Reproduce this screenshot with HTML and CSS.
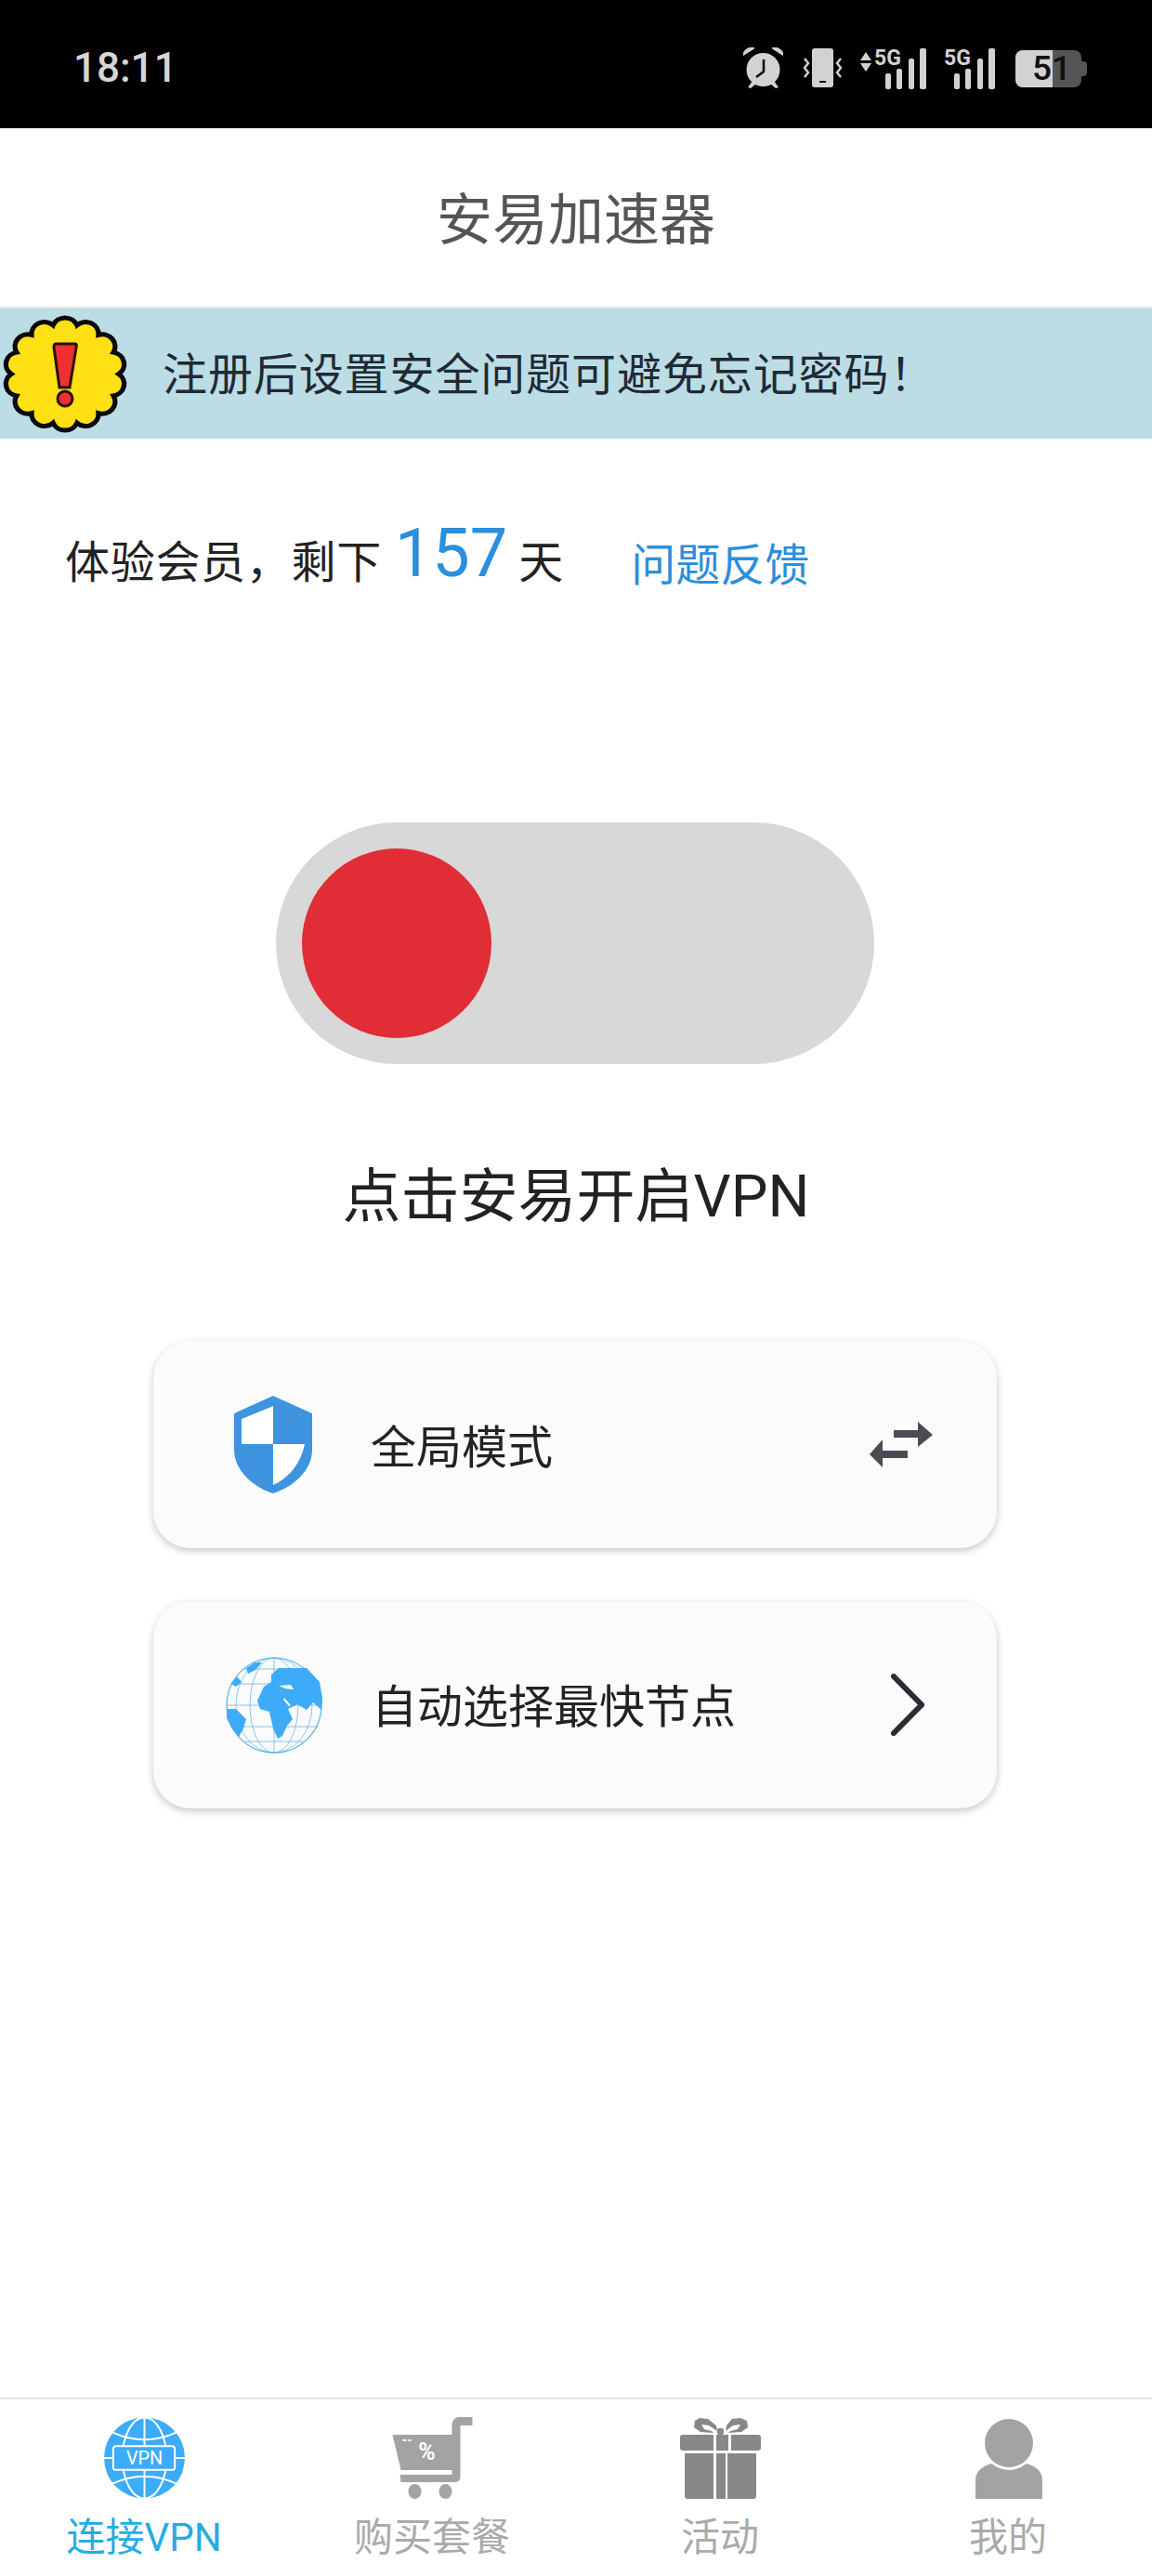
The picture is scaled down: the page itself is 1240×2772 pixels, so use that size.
FILE: index.html
```html
<!DOCTYPE html>
<html lang="zh-CN">
<head>
    <meta charset="UTF-8">
    <meta name="viewport" content="width=device-width, initial-scale=1.0">
    <title>安易加速器</title>
    <link rel="stylesheet" href="styles.css">
</head>
<body>

    <div class="status-bar">
        <span class="status-time">18:11</span>
        <div class="status-icons">
            <svg class="ic-alarm" viewBox="0 0 43 44">
                <path d="M0 8 Q3 0 11 1 Z M43 8 Q40 0 32 1 Z" fill="#d2d2d2" stroke="#d2d2d2" stroke-width="2" stroke-linejoin="round"/>
                <circle cx="21.5" cy="24" r="18" fill="#d2d2d2"/>
                <path d="M5 43 L10 36 L14 39 L8 44 Z M38 43 L33 36 L29 39 L35 44 Z" fill="#d2d2d2"/>
                <path d="M22 13 L22 26 L14 32" fill="none" stroke="#111" stroke-width="2.6"/>
            </svg>
            <svg class="ic-vibrate" viewBox="0 0 43 42">
                <rect x="10" y="0" width="23" height="42" rx="3" fill="#d2d2d2"/>
                <rect x="18" y="35" width="7" height="2" fill="#111"/>
                <path d="M2 11 L6 16 L2 21 L6 26 L2 31 M41 11 L37 16 L41 21 L37 26 L41 31" fill="none" stroke="#d2d2d2" stroke-width="2.4"/>
            </svg>
            <svg class="ic-signal-a" viewBox="0 0 72 44">
                <path d="M0 13 L6 4 L12 13 Z M0 16 L12 16 L6 25 Z" fill="#d2d2d2"/>
                <text x="15" y="18" class="net-label">5G</text>
                <rect x="27" y="27" width="6" height="17" rx="2" fill="#d2d2d2"/>
                <rect x="39" y="22" width="6" height="22" rx="2" fill="#d2d2d2"/>
                <rect x="52" y="11" width="6" height="33" rx="2" fill="#d2d2d2"/>
                <rect x="64" y="0" width="7" height="44" rx="2" fill="#d2d2d2"/>
            </svg>
            <svg class="ic-signal-b" viewBox="0 0 56 44">
                <text x="0" y="18" class="net-label">5G</text>
                <rect x="11" y="27" width="6" height="17" rx="2" fill="#d2d2d2"/>
                <rect x="23" y="22" width="6" height="22" rx="2" fill="#d2d2d2"/>
                <rect x="36" y="11" width="6" height="33" rx="2" fill="#d2d2d2"/>
                <rect x="48" y="0" width="7" height="44" rx="2" fill="#d2d2d2"/>
            </svg>
            <div class="battery">
                <div class="battery-level"></div>
                <span class="battery-text">51</span>
            </div>
        </div>
    </div>

    <div class="title-bar">安易加速器</div>

    <div class="notice">
        <svg class="notice-icon" viewBox="0 0 136 127">
            <g transform="translate(68 63.5) scale(1.07 1) translate(-70 -70)">
                <path d="M124 70 A13 13 0 0 1 118.7 93.4 A13 13 0 0 1 103.7 112.2 A13 13 0 0 1 82 122.6 A13 13 0 0 1 58 122.6 A13 13 0 0 1 36.3 112.2 A13 13 0 0 1 21.3 93.4 A13 13 0 0 1 16 70 A13 13 0 0 1 21.3 46.6 A13 13 0 0 1 36.3 27.8 A13 13 0 0 1 58 17.4 A13 13 0 0 1 82 17.4 A13 13 0 0 1 103.7 27.8 A13 13 0 0 1 118.7 46.6 A13 13 0 0 1 124 70 Z" fill="#ffe014" stroke="#0a0a0a" stroke-width="5"/>
            </g>
            <path d="M58 31 L79 31 Q81 31 80 35 L73 78 L62 78 L56 35 Q56 31 58 31 Z" fill="#ee3030" stroke="#2a1010" stroke-width="3"/>
            <circle cx="68" cy="90" r="8" fill="#ee3030" stroke="#2a1010" stroke-width="3"/>
        </svg>
        <span class="notice-text">注册后设置安全问题可避免忘记密码！</span>
    </div>

    <div class="info-row">
        <span class="info-label">体验会员，剩下</span>
        <span class="info-days">157</span>
        <span class="info-unit">天</span>
        <a class="info-link">问题反馈</a>
    </div>

    <div class="toggle">
        <div class="toggle-knob"></div>
    </div>

    <div class="toggle-hint">点击安易开启VPN</div>

    <div class="card">
        <svg class="card-shield" viewBox="0 0 84 105">
            <path d="M42 0 L84 19 L84 58 C84 80 64 98 42 105 C20 98 0 80 0 58 L0 19 Z" fill="#3f94df"/>
            <path d="M42 11 L8 25 L8 52 L42 52 Z M42 52 L76 52 C72 72 60 88 42 96 Z" fill="#fff"/>
        </svg>
        <span class="card-text card-text-mode">全局模式</span>
        <svg class="card-arrows" viewBox="0 0 68 49">
            <path d="M26 9 L52 9 L52 0 L68 14 L52 27 L52 17 L26 17 Z M41 31 L14 31 L14 19 L0 35 L14 49 L14 39 L41 39 Z" fill="#4b4b53"/>
        </svg>
    </div>

    <div class="card card-second">
        <svg class="card-globe" viewBox="0 0 104 104">
            <g fill="none" stroke="#58b0e8" stroke-width="0.7">
                <ellipse cx="52" cy="52" rx="26" ry="51"/>
                <ellipse cx="52" cy="52" rx="41" ry="51"/>
                <path d="M52 1 L52 103 M1 52 L103 52 M5 29 L99 29 M5 75 L99 75 M20 13 L84 13 M20 91 L84 91"/>
            </g>
            <circle cx="52" cy="52" r="51" fill="none" stroke="#58b0e8" stroke-width="1.2"/>
            <g fill="#3dabf8">
                <path d="M49 19 L57 12 L87 12 L101 27 L104 44 L103 57 L94 49 L87 57 L77 51 L67 56 L72 67 L66 74 L61 85 L56 88 L51 77 L47 59 L37 56 L34 47 L41 32 L49 27 Z"/>
                <path d="M1 56 L11 56 L22 67 L19 77 L14 86 L6 76 L1 66 Z"/>
                <path d="M22 12 L31 6 L39 6 L32 14 L24 18 Z"/>
                <path d="M6 29 L12 21 L17 27 L11 32 Z"/>
            </g>
            <path d="M57 31 L70 30 L73 35 L64 34 Z M63 44 L70 52 L68 53 L62 46 Z" fill="#fff"/>
        </svg>
        <span class="card-text card-text-node">自动选择最快节点</span>
        <svg class="card-chevron" viewBox="0 0 36 67">
            <path d="M3 3 L33 33.5 L3 64" fill="none" stroke="#2c2c34" stroke-width="6" stroke-linecap="round"/>
        </svg>
    </div>

    <div class="tab-bar">
        <div class="tab tab-active">
            <svg class="tab-icon" viewBox="0 0 88 88">
                <ellipse cx="44" cy="44" rx="44" ry="44" fill="#3cacf8"/>
                <g fill="none" stroke="#fff" stroke-width="2">
                    <path d="M44 0 L44 88 M0 44 L88 44 M9 16 Q44 32 79 16 M9 72 Q44 56 79 72"/>
                    <ellipse cx="44" cy="44" rx="24" ry="44"/>
                    <rect x="10" y="31" width="67" height="26" rx="3" fill="#3cacf8"/>
                </g>
                <text x="44" y="51" class="vpn-label">VPN</text>
            </svg>
            <span class="tab-label">连接VPN</span>
        </div>
        <div class="tab">
            <svg class="tab-icon" viewBox="0 0 86 88">
                <path d="M0 19 L64 19 L64 8 Q65 0 72 0 L86 0 L86 9 L73 9 L73 64 Q73 70 67 70 L9 70 L8 62 L64 62 L64 57 L9 57 Z" fill="#a3a3a3"/>
                <ellipse cx="24" cy="80" rx="7" ry="8" fill="#a3a3a3"/>
                <ellipse cx="57" cy="80" rx="7" ry="8" fill="#a3a3a3"/>
                <path d="M11 25 L15 25 M17 25 L20 25" stroke="#fff" stroke-width="2"/>
                <text x="37" y="46" class="cart-label">%</text>
            </svg>
            <span class="tab-label">购买套餐</span>
        </div>
        <div class="tab">
            <svg class="tab-icon" viewBox="0 0 87 88">
                <path d="M3 19 L36 19 L36 36 L3 36 Q0 36 0 33 L0 22 Q0 19 3 19 Z M39 19 L52 19 L52 36 L39 36 Z M55 19 L84 19 Q87 19 87 22 L87 33 Q87 36 84 36 L55 36 Z" fill="#888"/>
                <path d="M5 39 L36 39 L36 88 L8 88 Q5 88 5 85 Z M39 39 L49 39 L49 88 L39 88 Z M51 39 L82 39 L82 85 Q82 88 79 88 L51 88 Z" fill="#888"/>
                <path d="M21 1 L30 2 L39 9 L40 15 L31 9 L23 8 L26 13 L34 15 L36 17 L22 16 L15 11 L16 4 Z" fill="#888"/>
                <path d="M65 1 L56 2 L50 9 L49 15 L57 9 L65 8 L62 13 L54 15 L52 17 L66 16 L73 11 L72 4 Z" fill="#888"/>
                <rect x="40" y="12" width="7" height="7" rx="2" fill="#888"/>
            </svg>
            <span class="tab-label">活动</span>
        </div>
        <div class="tab">
            <svg class="tab-icon" viewBox="-8 0 87 88">
                <ellipse cx="36" cy="28" rx="26" ry="26" fill="#a3a3a3"/>
                <path d="M0 88 L0 68 Q0 55 17 50 Q36 64 55 50 Q72 55 72 68 L72 88 Z" fill="#a3a3a3"/>
            </svg>
            <span class="tab-label">我的</span>
        </div>
    </div>

</body>
</html>
```

FILE: styles.css
```css
body {
    font-family: Roboto, "Noto Sans CJK SC", sans-serif;
    margin: 0;
    width: 1240px;
    height: 2772px;
    background-color: white;
    color: #222;
    display: flex;
    flex-direction: column;
    overflow: hidden;
}

/* status bar */
.status-bar {
    height: 138px;
    background-color: black;
    color: #d6d6d6;
    display: flex;
    align-items: center;
    padding: 0 76px 0 79px;
    justify-content: space-between;
    box-sizing: border-box;
}

.status-time {
    font-size: 44px;
    font-weight: 500;
    margin-top: 8px;
}

.status-icons {
    display: flex;
    align-items: flex-start;
    margin-top: 8px;
}

.ic-alarm {
    width: 43px;
    height: 44px;
}

.ic-vibrate {
    width: 43px;
    height: 42px;
    margin-left: 21px;
    margin-top: 1px;
}

.ic-signal-a {
    width: 72px;
    height: 44px;
    margin-left: 19px;
    margin-top: 1px;
    overflow: visible;
}

.ic-signal-b {
    width: 56px;
    height: 44px;
    margin-left: 18px;
    margin-top: 1px;
    overflow: visible;
}

.net-label {
    font-family: Roboto, sans-serif;
    font-size: 23px;
    font-weight: 700;
    fill: #d2d2d2;
}

.battery {
    width: 71px;
    height: 40px;
    margin-left: 21px;
    margin-top: 3px;
    background-color: #555;
    border-radius: 8px;
    position: relative;
}

.battery::after {
    content: "";
    position: absolute;
    right: -6px;
    top: 12px;
    width: 6px;
    height: 16px;
    background-color: #555;
    border-radius: 0 4px 4px 0;
}

.battery-level {
    width: 40px;
    height: 40px;
    background-color: #d2d2d2;
    border-radius: 8px 0 0 8px;
}

.battery-text {
    position: absolute;
    left: 18px;
    top: 0;
    width: 44px;
    line-height: 40px;
    font-size: 37px;
    font-weight: 500;
    color: #111;
}

/* title */
.title-bar {
    height: 192px;
    line-height: 200px;
    text-align: center;
    font-size: 60px;
    color: #555;
}

.notice {
    height: 140px;
    border-top: 2px solid #e4e4e4;
    background-color: #bcdde5;
    display: flex;
    align-items: center;
    color: #1f2a35;
}

.notice-icon {
    width: 136px;
    height: 127px;
    margin-left: 2px;
    flex-shrink: 0;
}

.notice-text {
    font-size: 48px;
    margin-left: 37px;
    margin-top: -6px;
    letter-spacing: 0.9px;
    white-space: nowrap;
}

.info-row {
    height: 100px;
    margin-top: 76px;
    padding-left: 70px;
    display: flex;
    align-items: baseline;
    font-size: 48px;
    line-height: 100px;
}

.info-label {
    letter-spacing: 0.7px;
}

.info-days {
    font-size: 72px;
    color: #2a8fdc;
    margin-left: 14px;
    position: relative;
    top: -2px;
}

.info-unit {
    margin-left: 12px;
}

.info-link {
    color: #2a8fdc;
    margin-left: 73px;
    position: relative;
    top: 3px;
}

/* toggle */
.toggle {
    width: 644px;
    height: 260px;
    margin: 237px 0 0 297px;
    padding-left: 28px;
    background-color: #d8d8d8;
    border-radius: 130px;
    display: flex;
    align-items: center;
    box-sizing: border-box;
}

.toggle-knob {
    width: 204px;
    height: 204px;
    border-radius: 50%;
    background-color: #e02d36;
}

.toggle-hint {
    margin-top: 103px;
    height: 80px;
    line-height: 80px;
    text-align: center;
    font-size: 63px;
    color: #222;
}

/* cards */
.card {
    width: 908px;
    height: 223px;
    margin: 115px 0 0 165px;
    background-color: #fbfbfb;
    border-radius: 40px;
    box-shadow: 0 3px 8px rgba(0, 0, 0, 0.22);
    display: flex;
    align-items: center;
}

.card-second {
    margin-top: 57px;
}

.card-text {
    font-size: 49px;
    color: #222;
    white-space: nowrap;
}

.card-shield {
    width: 84px;
    height: 105px;
    margin-left: 87px;
}

.card-text-mode {
    margin-left: 63px;
    margin-top: -2px;
}

.card-arrows {
    width: 68px;
    height: 49px;
    margin-left: 341px;
}

.card-globe {
    width: 104px;
    height: 104px;
    margin-left: 78px;
}

.card-text-node {
    margin-left: 53px;
    margin-top: -4px;
}

.card-chevron {
    width: 36px;
    height: 67px;
    margin-left: 167px;
}

/* bottom tabs */
.tab-bar {
    margin-top: auto;
    height: 192px;
    border-top: 2px solid #e4e4e4;
    display: flex;
    box-sizing: border-box;
}

.tab {
    width: 310px;
    display: flex;
    flex-direction: column;
    align-items: center;
    padding-top: 19px;
    box-sizing: border-box;
    color: #aaa;
}

.tab-active {
    color: #26ace2;
}

.tab-icon {
    width: 87px;
    height: 88px;
}

.tab-label {
    font-size: 42px;
    line-height: 56px;
    margin-top: 14px;
}

.vpn-label {
    font-family: Roboto, sans-serif;
    font-size: 20px;
    fill: white;
    text-anchor: middle;
}

.cart-label {
    font-family: Roboto, sans-serif;
    font-size: 25px;
    font-weight: 700;
    fill: white;
    text-anchor: middle;
}
```
